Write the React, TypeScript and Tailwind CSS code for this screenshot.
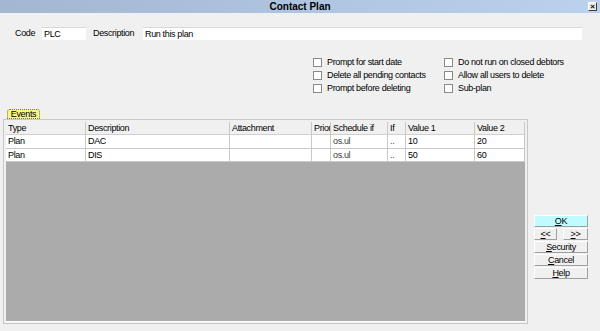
import React from "react";

const font = { fontFamily: '"Liberation Sans", Arial, sans-serif' };

const columns = [
  { name: "Type", w: "w-[80px]" },
  { name: "Description", w: "w-[144px]" },
  { name: "Attachment", w: "w-[82px]" },
  { name: "Prior", w: "w-[19px]" },
  { name: "Schedule if", w: "w-[57px]" },
  { name: "If", w: "w-[18px]" },
  { name: "Value 1", w: "w-[69px]" },
  { name: "Value 2", w: "w-[50px]" },
];

const rows = [
  ["Plan", "DAC", "", "", "os.ul", "..", "10", "20"],
  ["Plan", "DIS", "", "", "os.ul", "..", "50", "60"],
];

function Check({ label }: { label: string }) {
  return (
    <div className="flex items-center h-[13px] whitespace-nowrap">
      <span className="w-[9px] h-[9px] shrink-0 bg-white border border-[#8a8a8a]" />
      <span className="ml-[5px] leading-none">{label}</span>
    </div>
  );
}

function Btn({ children, className = "" }: { children: React.ReactNode; className?: string }) {
  return (
    <div
      className={`h-[12px] flex items-center justify-center leading-none border border-t-white border-l-white border-b-[#a0a0a0] border-r-[#a0a0a0] ${className}`}
    >
      {children}
    </div>
  );
}

export default function App() {
  return (
    <div className="w-[600px] h-[331px] bg-[#f0f0f0] text-[9px] tracking-[-0.35px] text-black overflow-hidden" style={font}>
      {/* Title bar */}
      <div className="h-[13px] bg-gradient-to-r from-[#a3b6d2] to-[#bad2ee] flex items-center relative">
        <span className="flex-1 text-center font-bold text-[10px] tracking-normal leading-none">Contact Plan</span>
        <span className="absolute right-[3px] top-[2px] w-[9px] h-[9px] bg-[#e8e8e8] border border-t-white border-l-white border-b-[#404040] border-r-[#404040] flex items-center justify-center text-[8px] font-bold leading-none">
          ×
        </span>
      </div>

      {/* Code / Description */}
      <div className="flex items-center mt-[14px] h-[13px] whitespace-nowrap">
        <span className="ml-[15px] w-[27px]">Code</span>
        <div className="w-[44px] h-[13px] bg-white border-t border-[#d8d8d8] pl-[2px] leading-[12px]">PLC</div>
        <span className="ml-[7px] w-[50px]">Description</span>
        <div className="w-[439px] h-[13px] bg-white border-t border-[#d8d8d8] pl-[2px] leading-[12px]">Run this plan</div>
      </div>

      {/* Options */}
      <div className="flex mt-[16px] ml-[313px]">
        <div className="w-[131px] flex flex-col">
          <Check label="Prompt for start date" />
          <Check label="Delete all pending contacts" />
          <Check label="Prompt before deleting" />
        </div>
        <div className="flex flex-col">
          <Check label="Do not run on closed debtors" />
          <Check label="Allow all users to delete" />
          <Check label="Sub-plan" />
        </div>
      </div>

      {/* Grid + buttons */}
      <div className="flex mt-[14px]">
        <div className="flex flex-col ml-[3px]">
          <div className="ml-[4px] w-[33px] h-[10px] bg-[#f7f77c] border border-dotted border-[#707070] rounded-t-[3px] flex items-center justify-center leading-none">
            Events
          </div>
          <div className="w-[525px] h-[205px] border border-[#c8c8c8] p-[2px] bg-[#f0f0f0]">
            <div className="w-[519px] h-[200px] bg-[#ababab] border-b border-white">
              <div className="flex h-[13px] bg-[#f0f0f0]">
                {columns.map((c) => (
                  <div
                    key={c.name}
                    className={`${c.w} shrink-0 h-full px-[2px] leading-[13px] whitespace-nowrap overflow-hidden border-r border-r-[#c8c8c8] border-b border-b-[#d0d0d0]`}
                  >
                    {c.name}
                  </div>
                ))}
              </div>
              {rows.map((r, i) => (
                <div key={i} className={`flex bg-white ${i === 0 ? "h-[14px]" : "h-[13px]"}`}>
                  {r.map((v, j) => (
                    <div
                      key={j}
                      className={`${columns[j].w} shrink-0 h-full px-[2px] leading-[13px] whitespace-nowrap overflow-hidden border-r border-b border-[#c8c8c8] ${
                        j === 4 || j === 5 ? "text-[#404040]" : ""
                      }`}
                    >
                      {v}
                    </div>
                  ))}
                </div>
              ))}
            </div>
          </div>
        </div>

        <div className="ml-[6px] mt-[106px] w-[54px] flex flex-col gap-[1px]">
          <Btn className="bg-[#c0fbff]">
            <span className="underline">O</span>K
          </Btn>
          <div className="flex justify-between">
            <Btn className="w-[23px]">
              <span className="underline">&lt;</span>&lt;
            </Btn>
            <Btn className="w-[25px]">
              <span className="underline">&gt;</span>&gt;
            </Btn>
          </div>
          <Btn>
            <span className="underline">S</span>ecurity
          </Btn>
          <Btn>
            <span className="underline">C</span>ancel
          </Btn>
          <Btn>
            <span className="underline">H</span>elp
          </Btn>
        </div>
      </div>
    </div>
  );
}
